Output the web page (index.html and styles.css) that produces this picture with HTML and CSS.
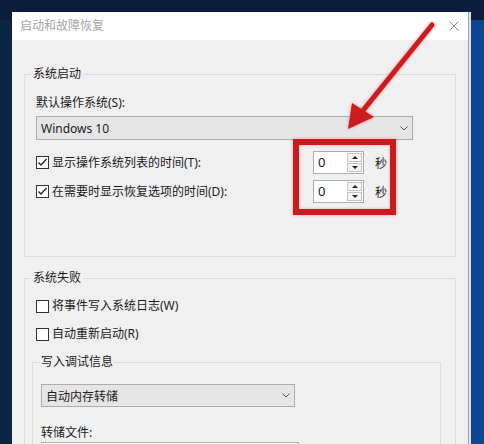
FILE: index.html
```html
<!doctype html>
<html>
<head>
<meta charset="utf-8">
<title>启动和故障恢复</title>
<link rel="stylesheet" href="styles.css">
</head>
<body>
<div class="dialog">
	<div class="titlebar">
		<span class="title">启动和故障恢复</span>
		<svg class="close" width="10" height="10" viewBox="0 0 10 10"><path d="M0.5 0.5L9.5 9.5M9.5 0.5L0.5 9.5"/></svg>
	</div>
	<div class="content">
		<fieldset class="group">
			<legend>系统启动</legend>
			<div class="group-body">
				<div class="label">默认操作系统(S):</div>
				<div class="select os-select">
					<span class="latin">Windows 10</span>
					<svg class="chev" width="8" height="5" viewBox="0 0 8 5"><polyline points="0.5,0.5 4,4 7.5,0.5"/></svg>
				</div>
				<div class="row">
					<label class="check"><span class="box"><svg width="11" height="11" viewBox="0 0 11 11"><path d="M1.5 5.5L4 8L9.5 2"/></svg></span>显示操作系统列表的时间(T):</label>
					<div class="spin"><span class="spin-val">0</span><span class="spin-btns"><span class="up"></span><span class="down"></span></span></div>
					<span class="unit">秒</span>
				</div>
				<div class="row row-next">
					<label class="check"><span class="box"><svg width="11" height="11" viewBox="0 0 11 11"><path d="M1.5 5.5L4 8L9.5 2"/></svg></span>在需要时显示恢复选项的时间(D):</label>
					<div class="spin"><span class="spin-val">0</span><span class="spin-btns"><span class="up"></span><span class="down"></span></span></div>
					<span class="unit">秒</span>
				</div>
			</div>
		</fieldset>

		<fieldset class="group group-fail">
			<legend>系统失败</legend>
			<div class="group-body fail-body">
				<label class="check line"><span class="box"></span>将事件写入系统日志(W)</label>
				<label class="check line line-next"><span class="box"></span>自动重新启动(R)</label>
				<fieldset class="group sub">
					<legend>写入调试信息</legend>
					<div class="sub-body">
						<div class="select dump-select">
							<span>自动内存转储</span>
							<svg class="chev" width="8" height="5" viewBox="0 0 8 5"><polyline points="0.5,0.5 4,4 7.5,0.5"/></svg>
						</div>
						<div class="label file-label">转储文件:</div>
						<div class="input"></div>
					</div>
				</fieldset>
			</div>
		</fieldset>
	</div>
</div>

<!-- 标注 -->
<div class="mark"></div>
<svg class="arrow" width="484" height="444" viewBox="0 0 484 444">
	<line x1="432" y1="25" x2="361" y2="113"/>
	<polygon points="348,129 352,103 374,117"/>
</svg>
</body>
</html>
```

FILE: styles.css
```css
*{margin:0; padding:0; box-sizing:border-box;}
body{width:484px; height:444px; overflow:hidden; position:relative; padding:12px 0 0 12px;
	font-family:"Noto Sans","Noto Sans CJK SC",sans-serif; font-size:12px; color:#1b1b1b;
	background:linear-gradient(#0a1d3a 0,#0a1d3a 20px,transparent 20px),linear-gradient(to right,#0b2345 0,#0b2345 470px,#0c4690 470px);}

.dialog{width:456px; height:432px; overflow:hidden; background:#f0f0f0; box-shadow:1px 0 0 #9aa3ad,3px 0 0 #dde2e6;}
.titlebar{height:28px; background:#fff; display:flex; align-items:center; justify-content:space-between; padding:0 9px 0 8px;}
.title{color:#a5a5a5; line-height:16px;}
.close path{stroke:#8a8a8a; stroke-width:1; fill:none;}

.content{padding:26px 12px 0 12px;}
.group{border:1px solid #dcdcdc; min-width:0;}
.group legend{margin-left:6px; padding:0 2px; line-height:16px;}
.group-body{padding:13px 11px 53px 11px;}
.label{line-height:16px;}

.select{display:flex; align-items:center; justify-content:space-between; background:#e5e5e5; border:1px solid #adadad; padding:0 4px 0 4px;}
.chev polyline{fill:none; stroke:#555; stroke-width:1;}
.os-select{width:377px; height:24px; margin-top:5px;}
.latin{font-size:12px;}

.row{display:flex; align-items:center; height:23px; margin-top:11px;}
.row-next{margin-top:6px;}
.check{display:flex; align-items:center; line-height:16px;}
.row .check{width:277px;}
.box{width:13px; height:13px; border:1px solid #333; background:#fff; margin-right:3px; display:flex; align-items:center; justify-content:center;}
.box path{fill:none; stroke:#222; stroke-width:1.3;}

.spin{width:51px; height:23px; background:#fff; border:1px solid #adadad; display:flex;}
.spin-val{flex:1; padding-left:4px; font-size:13px; line-height:21px;}
.spin-btns{width:15px; margin:1px 1px 1px 0; display:flex; flex-direction:column; gap:1px;}
.spin-btns span{flex:1; border:1px solid #c4c4c4; background:#f4f4f4; display:flex; align-items:center; justify-content:center;}
.spin-btns .up::after{content:""; border-left:3px solid transparent; border-right:3px solid transparent; border-bottom:3px solid #222;}
.spin-btns .down::after{content:""; border-left:3px solid transparent; border-right:3px solid transparent; border-top:3px solid #222;}
.unit{margin-left:11px;}

.group-fail{margin-top:13px;}
.fail-body{padding:12px 14px 0 7px;}
.line{margin-left:4px;}
.line-next{margin-top:12px;}
.sub{margin-top:12px;}
.sub legend{margin-left:7px; padding:0 1px;}
.sub-body{padding:14px 0 20px 8px;}
.dump-select{width:254px; height:23px;}
.file-label{margin-top:18px;}
.input{width:258px; height:24px; margin-top:1px; background:#fff; border:1px solid #adadad;}

.mark{position:absolute; left:293px; top:139px; width:103px; height:76px; border:6px solid #c81b20;
	box-shadow:0 0 3px rgba(255,110,110,.7),inset 0 0 3px rgba(255,110,110,.7);}
.arrow{position:absolute; left:0; top:0; pointer-events:none; filter:drop-shadow(0 0 1.5px rgba(255,120,120,.9));}
.arrow line{stroke:#cc1c1f; stroke-width:5; stroke-linecap:round;}
.arrow polygon{fill:#cc1c1f;}
```
